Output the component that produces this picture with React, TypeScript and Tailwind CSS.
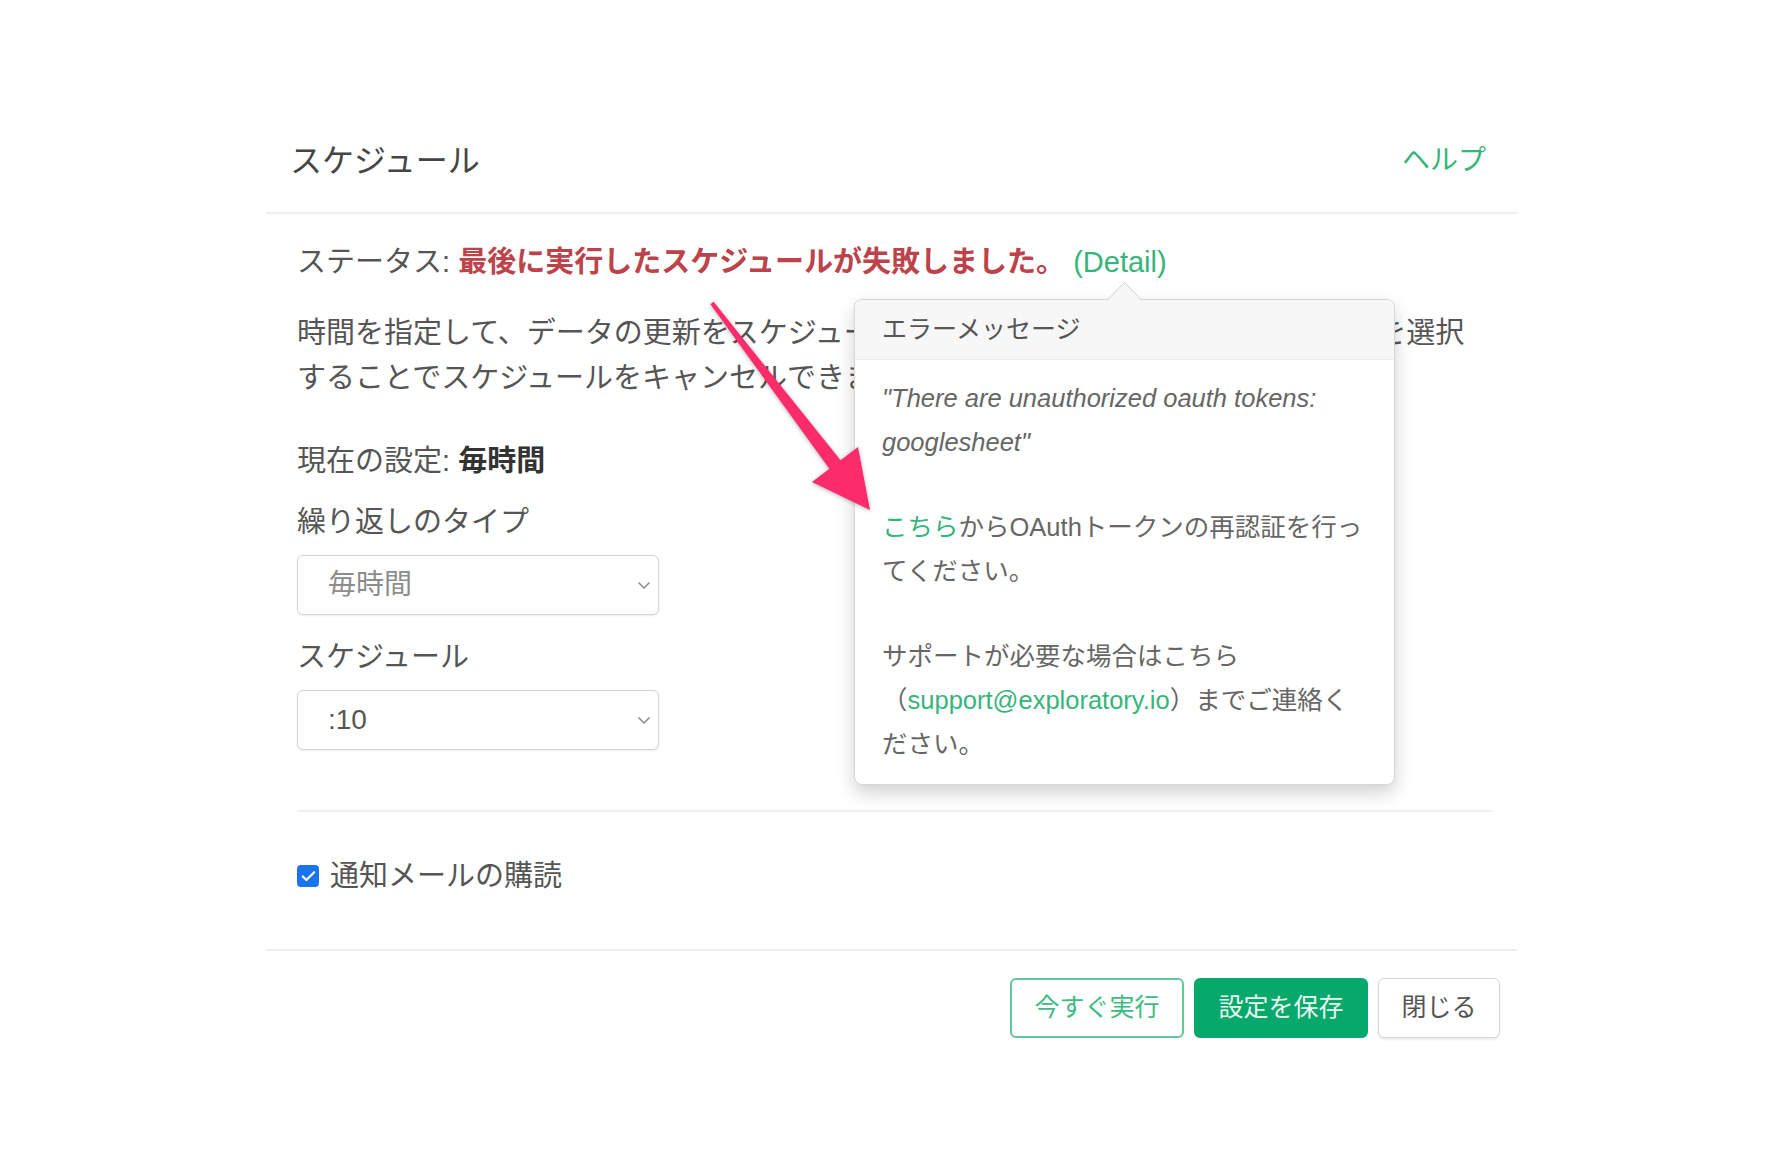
import { Check } from 'lucide-react'

const font = "font-['Liberation_Sans','Noto_Sans_CJK_JP',sans-serif]"

function Select({ value, muted }: { value: string; muted?: boolean }) {
  return (
    <div className="mt-[11px] flex h-[60px] w-[362px] items-center justify-between rounded-[6px] border border-[#d4d4d4] bg-white pl-[30px] pr-[7px] text-[28px] shadow-[0_1px_2px_rgba(0,0,0,0.08)]">
      <span className={muted ? 'text-[#8c8c8c]' : 'text-[#555]'}>{value}</span>
      <svg width="14" height="9" viewBox="0 0 14 9" fill="none">
        <path d="M1.5 1.5l5.5 5.5 5.5-5.5" stroke="#8a8a8a" strokeWidth="1.5" />
      </svg>
    </div>
  )
}

function ErrorPopover() {
  return (
    <div className="absolute left-[854px] top-[299px] w-[541px] rounded-[8px] border border-[#d6d6d6] bg-white shadow-[0_8px_18px_rgba(0,0,0,0.18)]">
      <svg className="absolute left-[252px] top-[-18px]" width="35" height="19" viewBox="0 0 35 19">
        <path d="M0 18.5 L17.5 0.5 L35 18.5" fill="#f7f7f7" stroke="#d0d0d0" strokeWidth="1" />
      </svg>
      <div className="flex h-[60px] items-center rounded-t-[8px] border-b border-[#ececec] bg-[#f7f7f7] px-[27px] text-[25px] text-[#555]">
        エラーメッセージ
      </div>
      <div className="px-[27px] pb-[18px] pt-[16px] text-[25.5px] leading-[44px] text-[#666]">
        <div className="italic whitespace-nowrap">"There are unauthorized oauth tokens:</div>
        <div className="italic whitespace-nowrap">googlesheet"</div>
        <div className="mt-[41px] whitespace-nowrap">
          <a className="text-[#35b57c]">こちら</a>からOAuthトークンの再認証を行っ
        </div>
        <div className="whitespace-nowrap">てください。</div>
        <div className="mt-[41px] whitespace-nowrap">サポートが必要な場合はこちら</div>
        <div className="whitespace-nowrap">
          （<a className="text-[#35b57c]">support@exploratory.io</a>）までご連絡く
        </div>
        <div className="whitespace-nowrap">ださい。</div>
      </div>
    </div>
  )
}

export default function App() {
  return (
    <div className={`relative min-h-[1152px] w-[1768px] bg-white text-[#555] ${font}`}>
      <div className="ml-[266px] w-[1251px] pt-[139px]">
        {/* header */}
        <div className="flex h-[44px] items-center justify-between pl-[24px] pr-[31px]">
          <h2 className="text-[32px] leading-[44px] text-[#454545]">スケジュール</h2>
          <a className="text-[28px] leading-[44px] text-[#35b57c]">ヘルプ</a>
        </div>
        <div className="mt-[29px] h-[2px] bg-[#efefef]" />

        {/* body */}
        <div className="pb-[51px] pl-[31px] pr-[25px] pt-[26px] text-[29px] leading-[44px]">
          <div className="whitespace-nowrap">
            ステータス: <span className="font-bold text-[#bd434b]">最後に実行したスケジュールが失敗しました。</span>{' '}
            <a className="text-[#35b57c]">(Detail)</a>
          </div>
          <div className="mt-[27px] leading-[45px]">
            <div className="whitespace-nowrap">時間を指定して、データの更新をスケジュールすることができます。「実行しない」を選択</div>
            <div className="whitespace-nowrap">することでスケジュールをキャンセルできます。</div>
          </div>
          <div className="mt-[38px]">
            現在の設定: <span className="font-bold text-[#333]">毎時間</span>
          </div>
          <div className="mt-[17px]">繰り返しのタイプ</div>
          <Select value="毎時間" muted />
          <div className="mt-[20px]">スケジュール</div>
          <Select value=":10" />
          <div className="mt-[60px] h-[2px] bg-[#efefef]" />
          <label className="mt-[42px] flex h-[44px] items-center gap-[11px]">
            <span className="flex h-[22px] w-[22px] items-center justify-center rounded-[4px] bg-[#1a74f0]">
              <Check size={17} strokeWidth={3} className="text-white" />
            </span>
            <span>通知メールの購読</span>
          </label>
        </div>

        {/* footer */}
        <div className="h-[2px] bg-[#efefef]" />
        <div className="flex justify-end gap-[10px] pr-[17px] pt-[27px] text-[25px]">
          <button className="h-[60px] w-[174px] rounded-[6px] border-2 border-[#62c79a] bg-white text-[#3dbb82]">
            今すぐ実行
          </button>
          <button className="h-[60px] w-[174px] rounded-[6px] border-2 border-[#06a86b] bg-[#06a86b] text-[#e8f7f0]">
            設定を保存
          </button>
          <button className="h-[60px] w-[122px] rounded-[6px] border border-[#d6d6d6] bg-white text-[#555] shadow-[0_2px_2px_rgba(0,0,0,0.08)]">
            閉じる
          </button>
        </div>
      </div>

      <ErrorPopover />

      {/* annotation arrow */}
      <svg className="pointer-events-none absolute left-0 top-0" width="1768" height="1152" viewBox="0 0 1768 1152">
        <polygon
          points="713.6,301.8 840.6,460.2 858,447 870,510 812,482 829.4,468.8 710.4,304.2"
          fill="#fc2c6c"
          style={{ filter: 'drop-shadow(0 1px 2px rgba(0,0,0,0.3))' }}
        />
      </svg>
    </div>
  )
}
